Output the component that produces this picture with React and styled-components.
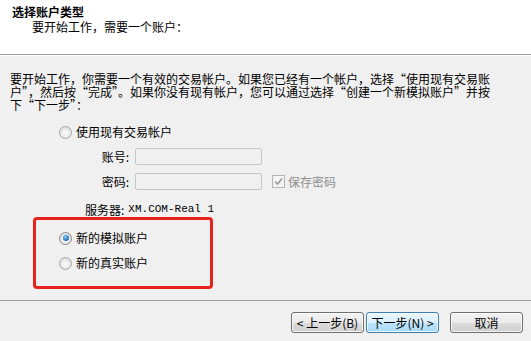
import React from "react";
import styled, { createGlobalStyle } from "styled-components";

const Global = createGlobalStyle`
  html, body { margin: 0; padding: 0; background: #f0f0f0; }
  body { font-family: "Noto Sans CJK SC", "Liberation Sans", sans-serif; font-size: 12px; color: #000; }
`;

const Dialog = styled.div`
  width: 531px;
  height: 341px;
  display: flex;
  flex-direction: column;
  background: #f0f0f0;
  overflow: hidden;
`;

const Header = styled.div`
  height: 49px;
  padding-top: 5px;
  background: #fff;
  border-bottom: 1px solid #a0a0a0;
  box-shadow: 0 1px 0 #ffffff;
`;

const Title = styled.div`
  padding-left: 12px;
  font-weight: bold;
  font-size: 12px;
  line-height: 14px;
`;

const Subtitle = styled.div`
  padding-left: 32px;
  margin-top: 1px;
  line-height: 14px;
`;

const Body = styled.div`
  flex: 1;
  display: flex;
  flex-direction: column;
  padding-top: 17px;
`;

const Paragraph = styled.div`
  padding-left: 10px;
  line-height: 13px;
`;

const Line = styled.div`
  white-space: nowrap;
`;

const OptionRow = styled.label`
  display: flex;
  align-items: center;
  gap: 4px;
  height: 16px;
  margin-left: ${(p) => p.$indent || 0}px;
  margin-top: ${(p) => p.$top || 0}px;
  line-height: 16px;
`;

const RadioCircle = styled.span`
  position: relative;
  box-sizing: border-box;
  width: 13px;
  height: 13px;
  border-radius: 50%;
  border: 1px solid ${(p) => (p.$checked ? "#8a8a8a" : "#a8a8a8")};
  background: radial-gradient(circle at 50% 55%, #fbfbfb 0%, #ececec 45%, #cfcfcf 100%);
  flex: none;
  &::after {
    content: "";
    display: ${(p) => (p.$checked ? "block" : "none")};
    position: absolute;
    left: 2.5px;
    top: 2.5px;
    width: 6px;
    height: 6px;
    border-radius: 50%;
    background: radial-gradient(circle at 40% 35%, #9ad6ff 0%, #3b8fd6 40%, #174f86 100%);
  }
`;

const FieldRow = styled.div`
  display: flex;
  align-items: center;
  margin-top: ${(p) => p.$top}px;
  height: 17px;
`;

const FieldLabel = styled.span`
  width: 44px;
  margin-left: 85px;
  text-align: right;
  padding-right: 6px;
`;

const TextBox = styled.div`
  box-sizing: border-box;
  width: 127px;
  height: 17px;
  border: 1px solid #c6c6c6;
  border-radius: 2px;
  background: #f0f0f0;
`;

const CheckWrap = styled.span`
  display: flex;
  align-items: center;
  gap: 3px;
  margin-left: 10px;
  color: #8d8d8d;
`;

const CheckBox = styled.span`
  box-sizing: border-box;
  width: 13px;
  height: 13px;
  border: 1px solid #b4b4b4;
  background: #f4f4f4;
  display: flex;
  align-items: center;
  justify-content: center;
`;

const ServerRow = styled.div`
  display: flex;
  align-items: center;
  height: 14px;
  margin-top: 12px;
  margin-left: 85px;
`;

const ServerValue = styled.span`
  font-family: "Liberation Mono", "DejaVu Sans Mono", monospace;
  font-size: 11px;
  margin-left: 4px;
`;

const Highlight = styled.div`
  box-sizing: border-box;
  margin-top: 1px;
  margin-left: 33px;
  width: 180px;
  height: 72px;
  border: 3px solid #e8221f;
  border-radius: 4px;
  padding-top: 10px;
`;

const Footer = styled.div`
  box-sizing: border-box;
  height: 41px;
  border-top: 1px solid #a0a0a0;
  display: flex;
  justify-content: flex-end;
  align-items: flex-start;
  padding-top: 11px;
  padding-right: 8px;
`;

const Button = styled.button`
  box-sizing: border-box;
  width: 73px;
  height: 21px;
  margin-left: ${(p) => p.$gap || 0}px;
  padding: 0;
  font-family: "Noto Sans CJK SC", "Liberation Sans", sans-serif;
  font-size: 12px;
  line-height: 17px;
  color: #000;
  border-radius: 3px;
  border: 1px solid ${(p) => (p.$focused ? "#3c7fb1" : "#707070")};
  background: ${(p) =>
    p.$focused
      ? "linear-gradient(#eaf6fd 0%, #d9f0fc 50%, #bee6fd 50%, #a7d9f5 100%)"
      : "linear-gradient(#f2f2f2 0%, #ebebeb 50%, #dddddd 50%, #cfcfcf 100%)"};
  box-shadow: inset 0 0 0 1px rgba(255, 255, 255, 0.75);
`;

export default function App() {
  return (
    <>
      <Global />
      <Dialog lang="zh-CN">
        <Header>
          <Title>选择账户类型</Title>
          <Subtitle>要开始工作，需要一个账户：</Subtitle>
        </Header>
        <Body>
          <Paragraph>
            <Line>要开始工作，你需要一个有效的交易帐户。如果您已经有一个帐户，选择“使用现有交易账</Line>
            <Line>户”，然后按“完成”。如果你没有现有帐户，您可以通过选择“创建一个新模拟账户”并按</Line>
            <Line>下“下一步”：</Line>
          </Paragraph>
          <OptionRow $indent={59} $top={13}>
            <RadioCircle />
            使用现有交易帐户
          </OptionRow>
          <FieldRow $top={8}>
            <FieldLabel>账号:</FieldLabel>
            <TextBox />
          </FieldRow>
          <FieldRow $top={8}>
            <FieldLabel>密码:</FieldLabel>
            <TextBox />
            <CheckWrap>
              <CheckBox>
                <svg width="9" height="9" viewBox="0 0 9 9">
                  <path d="M1 4.5 L3.5 7 L8 1.5" fill="none" stroke="#9a9a9a" strokeWidth="1.6" />
                </svg>
              </CheckBox>
              保存密码
            </CheckWrap>
          </FieldRow>
          <ServerRow>
            服务器:<ServerValue>XM.COM-Real 1</ServerValue>
          </ServerRow>
          <Highlight>
            <OptionRow $indent={23}>
              <RadioCircle $checked />
              新的模拟账户
            </OptionRow>
            <OptionRow $indent={23} $top={9}>
              <RadioCircle />
              新的真实账户
            </OptionRow>
          </Highlight>
        </Body>
        <Footer>
          <Button>&lt; 上一步(B)</Button>
          <Button $focused $gap={2}>下一步(N) &gt;</Button>
          <Button $gap={11}>取消</Button>
        </Footer>
      </Dialog>
    </>
  );
}
